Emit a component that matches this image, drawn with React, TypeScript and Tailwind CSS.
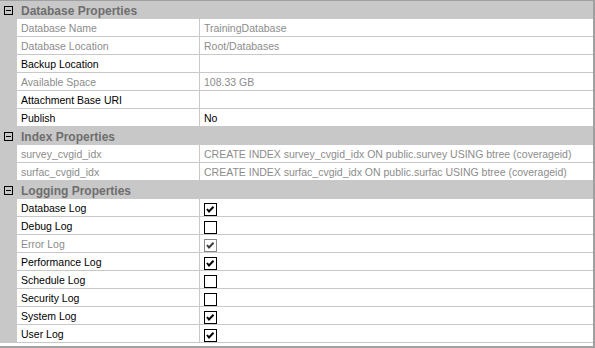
import React from "react";

type Row = { label: string; value?: string; labelGray?: boolean; check?: boolean; checkDisabled?: boolean };

const sections: { title: string; rows: Row[] }[] = [
  {
    title: "Database Properties",
    rows: [
      { label: "Database Name", value: "TrainingDatabase", labelGray: true },
      { label: "Database Location", value: "Root/Databases", labelGray: true },
      { label: "Backup Location", value: "" },
      { label: "Available Space", value: "108.33 GB", labelGray: true },
      { label: "Attachment Base URI", value: "" },
      { label: "Publish", value: "No" },
    ],
  },
  {
    title: "Index Properties",
    rows: [
      {
        label: "survey_cvgid_idx",
        value: "CREATE INDEX survey_cvgid_idx ON public.survey USING btree (coverageid)",
        labelGray: true,
      },
      {
        label: "surfac_cvgid_idx",
        value: "CREATE INDEX surfac_cvgid_idx ON public.surfac USING btree (coverageid)",
        labelGray: true,
      },
    ],
  },
  {
    title: "Logging Properties",
    rows: [
      { label: "Database Log", check: true },
      { label: "Debug Log", check: false },
      { label: "Error Log", check: true, labelGray: true, checkDisabled: true },
      { label: "Performance Log", check: true },
      { label: "Schedule Log", check: false },
      { label: "Security Log", check: false },
      { label: "System Log", check: true },
      { label: "User Log", check: true },
    ],
  },
];

function CheckBox({ checked, disabled }: { checked: boolean; disabled?: boolean }) {
  const c = disabled ? "#8a8a8a" : "#000000";
  return (
    <svg width="13" height="13" viewBox="0 0 13 13" className="block">
      <rect x="0.5" y="0.5" width="12" height="12" fill="#ffffff" stroke={c} strokeWidth="1" />
      {checked && (
        <path d="M3 6 L5 8.5 L9.5 3.8" fill="none" stroke={disabled ? "#3a3a3a" : "#000"} strokeWidth="2" />
      )}
    </svg>
  );
}

function MinusBox() {
  return (
    <svg width="9" height="9" viewBox="0 0 9 9" className="block">
      <rect x="0.5" y="0.5" width="8" height="8" fill="none" stroke="#000" strokeWidth="1" />
      <path d="M2 4.5 H7" stroke="#000" strokeWidth="1" />
    </svg>
  );
}

export default function App() {
  return (
    <div
      className="w-[595px] h-[348px] bg-white border-t border-r-2 border-b-2 border-[#a0a0a0] flex flex-col overflow-hidden"
      style={{ fontFamily: '"Liberation Sans", Arial, sans-serif' }}
    >
      {sections.map((s) => (
        <div key={s.title} className="flex flex-col">
          <div className="h-[18px] bg-[#c8c8c8] flex items-center">
            <div className="w-[17px] h-full flex items-center pl-[4px] pt-[1px]">
              <MinusBox />
            </div>
            <span className="pl-[4px] pt-[1px] text-[12px] font-bold text-[#6e6e6e] leading-none">{s.title}</span>
          </div>
          {s.rows.map((r) => (
            <div key={r.label} className="h-[18px] flex">
              <div className="w-[17px] bg-[#c8c8c8]" />
              <div
                className={`w-[183px] border-b border-r border-[#c8c8c8] flex items-center pl-[4px] pt-[1px] text-[10.5px] leading-none ${
                  r.labelGray ? "text-[#8c8c8c]" : "text-black"
                }`}
              >
                {r.label}
              </div>
              {r.check !== undefined ? (
                <div className="flex-1 border-b border-[#c8c8c8] flex items-center pl-[4px] pt-[3px]">
                  <CheckBox checked={r.check} disabled={r.checkDisabled} />
                </div>
              ) : (
                <div className="flex-1 border-b border-[#c8c8c8] flex items-center pl-[4px] pt-[1px] text-[10.5px] leading-none whitespace-nowrap">
                  <span className={r.value === "No" ? "text-black" : "text-[#8c8c8c]"}>{r.value}</span>
                </div>
              )}
            </div>
          ))}
        </div>
      ))}
    </div>
  );
}
